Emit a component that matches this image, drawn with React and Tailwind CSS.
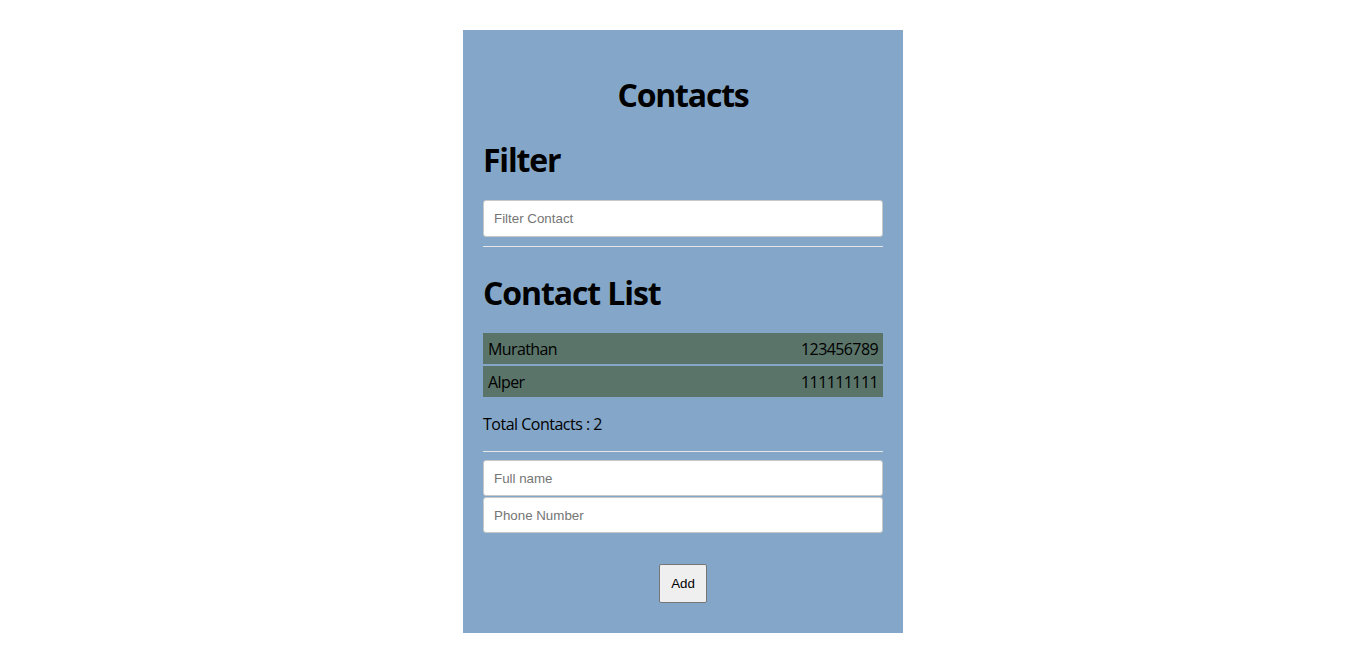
import React, { useState } from 'react';

const contacts = [
    { name: 'Murathan', phone: '123456789' },
    { name: 'Alper', phone: '111111111' },
];

const inputClass = "block w-full px-[10px] bg-white border border-[#c8c8c8] rounded-[3px] text-[13.33px] text-black placeholder:text-[#757575] outline-none font-['Liberation_Sans',Arial,sans-serif] tracking-normal";

export default function App() {
    const [filter, setFilter] = useState('');
    const [name, setName] = useState('');
    const [phone, setPhone] = useState('');

    const visible = contacts.filter((c) => c.name.toLowerCase().includes(filter.toLowerCase()));

    return (
        <div className="flex justify-center pt-[30px] pl-[6px] bg-white min-h-[658px] font-['Open_Sans','Noto_Sans',sans-serif] text-black">
            <div className="w-[440px] bg-[#84a7c9] px-5 pt-[45px] pb-[30px] self-start">
                <h1 className="text-[32px] leading-[40px] font-bold text-center tracking-[-1.2px]">Contacts</h1>

                {/* Filter */}
                <h2 className="mt-[25px] text-[32px] leading-[40px] font-bold tracking-[-1.2px]">Filter</h2>
                <input
                    className={`${inputClass} h-[37px] mt-5`}
                    placeholder="Filter Contact"
                    value={filter}
                    onChange={(e) => setFilter(e.target.value)}
                />
                <hr className="mt-[9px] border-0 h-px bg-[#e6e6e6]" />

                {/* List */}
                <h2 className="mt-[26px] text-[32px] leading-[40px] font-bold tracking-[-1.1px]">Contact List</h2>
                <ul className="mt-5 flex flex-col gap-[2px]">
                    {visible.map((c) => (
                        <li key={c.name} className="flex justify-between items-center h-[31px] px-[5px] pt-px bg-[#5a7469] text-[16px] tracking-[-0.6px]">
                            <span>{c.name}</span>
                            <span>{c.phone}</span>
                        </li>
                    ))}
                </ul>
                <p className="mt-[15px] text-[16px] leading-[24px] tracking-[-0.5px]">Total Contacts : {visible.length}</p>
                <hr className="mt-[15px] border-0 h-px bg-[#e6e6e6]" />

                {/* Add form */}
                <div className="mt-[8px] flex flex-col gap-px">
                    <input className={`${inputClass} h-[36px]`} placeholder="Full name" value={name} onChange={(e) => setName(e.target.value)} />
                    <input className={`${inputClass} h-[36px]`} placeholder="Phone Number" value={phone} onChange={(e) => setPhone(e.target.value)} />
                </div>
                <div className="mt-[31px] flex justify-center">
                    <button className="w-[48px] h-[39px] bg-[#efefef] border border-[#767676] rounded-[2px] text-[13.33px] font-['Liberation_Sans',Arial,sans-serif]">
                        Add
                    </button>
                </div>
            </div>
        </div>
    );
}
